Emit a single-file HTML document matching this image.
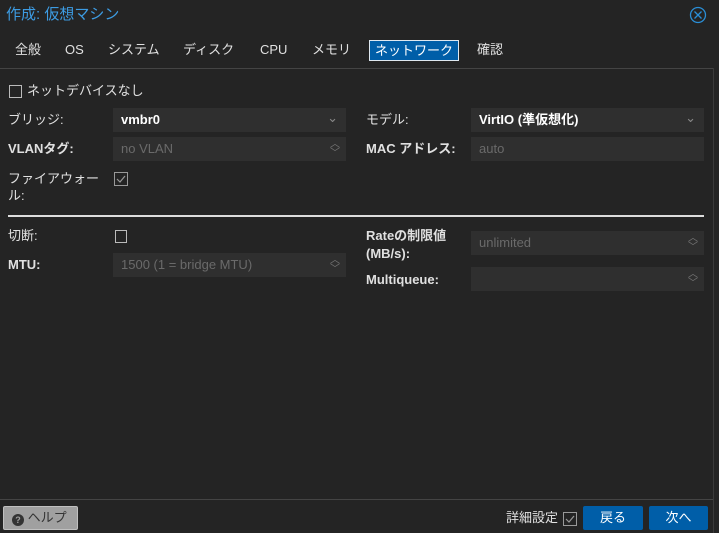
<!DOCTYPE html><html><head><meta charset="utf-8"><style>
*{box-sizing:border-box;margin:0;padding:0}
body{width:719px;height:533px;background:#242424;font-family:"Liberation Sans","Noto Sans CJK JP",sans-serif;font-size:13px;line-height:16px;color:#e0e0e0;position:relative;overflow:hidden}
.a{position:absolute;white-space:nowrap;line-height:16px}
.f{position:absolute;height:24px;background:#2f2f2f;padding:0 8px;line-height:24px;font-size:13px}
.dis{color:#6a6a6a}
.chk{position:absolute;width:13px;height:13px;border:1px solid #bbb}
.b{position:absolute;font-weight:bold;white-space:nowrap;line-height:16px}
.ar{position:absolute;right:6px;top:3px;color:#777;font-size:10px;line-height:9px;font-weight:normal}
</style></head><body>
<div class="a" style="left:6px;top:7px;font-size:15px;color:#3d9ce3">作成: 仮想マシン</div>
<svg class="a" style="left:689px;top:6px" width="18" height="18"><circle cx="9" cy="9" r="7.5" fill="none" stroke="#2a8ed6" stroke-width="1.3"/><path d="M5.5 5.5L12.5 12.5M12.5 5.5L5.5 12.5" stroke="#2a8ed6" stroke-width="1.3"/></svg>
<div class="a" style="left:15px;top:42px">全般</div>
<div class="a" style="left:65px;top:42px">OS</div>
<div class="a" style="left:108px;top:42px">システム</div>
<div class="a" style="left:183px;top:42px">ディスク</div>
<div class="a" style="left:260px;top:42px">CPU</div>
<div class="a" style="left:312px;top:42px">メモリ</div>
<div class="a" style="left:369px;top:40px;width:90px;height:21px;background:#005ea8;border:1px solid #dfe8f0;color:#fff;padding-left:5px;line-height:19px">ネットワーク</div>
<div class="a" style="left:477px;top:42px">確認</div>
<div class="a" style="left:0;top:68px;width:713px;height:1px;background:#444"></div>
<div class="a" style="left:713px;top:68px;width:1px;height:465px;background:#3a3a3a"></div>
<div class="chk" style="left:9px;top:85px"></div>
<div class="a" style="left:27px;top:83px">ネットデバイスなし</div>
<div class="a" style="left:8px;top:112px">ブリッジ:</div>
<div class="f" style="left:113px;top:108px;width:233px;color:#fff;font-weight:bold">vmbr0<span class="a" style="right:8px;top:2px;color:#888;font-weight:normal">⌄</span></div>
<div class="b" style="left:8px;top:141px">VLANタグ:</div>
<div class="f dis" style="left:113px;top:137px;width:233px">no VLAN<span class="ar">︿<br>﹀</span></div>
<div class="a" style="left:8px;top:171px">ファイアウォー</div>
<div class="a" style="left:8px;top:188px">ル:</div>
<svg class="a" style="left:114px;top:172px" width="14" height="14"><rect x=".5" y=".5" width="13" height="13" fill="none" stroke="#999"/><path d="M3 7l3 3 5-6" fill="none" stroke="#999" stroke-width="1.2"/></svg>
<div class="a" style="left:366px;top:112px">モデル:</div>
<div class="f" style="left:471px;top:108px;width:233px;color:#fff;font-weight:bold">VirtIO (準仮想化)<span class="a" style="right:8px;top:2px;color:#888;font-weight:normal">⌄</span></div>
<div class="b" style="left:366px;top:141px">MAC アドレス:</div>
<div class="f dis" style="left:471px;top:137px;width:233px">auto</div>
<div class="a" style="left:8px;top:215px;width:696px;height:2px;background:#ddd"></div>
<div class="a" style="left:8px;top:228px">切断:</div>
<div class="chk" style="left:115px;top:230px;width:12px;height:13px"></div>
<div class="b" style="left:8px;top:257px">MTU:</div>
<div class="f dis" style="left:113px;top:253px;width:233px">1500 (1 = bridge MTU)<span class="ar">︿<br>﹀</span></div>
<div class="b" style="left:366px;top:228px">Rateの制限値</div>
<div class="b" style="left:366px;top:246px">(MB/s):</div>
<div class="f dis" style="left:471px;top:231px;width:233px">unlimited<span class="ar">︿<br>﹀</span></div>
<div class="b" style="left:366px;top:272px">Multiqueue:</div>
<div class="f" style="left:471px;top:267px;width:233px"><span class="ar">︿<br>﹀</span></div>
<div class="a" style="left:0;top:499px;width:713px;height:1px;background:#444"></div>
<div class="a" style="left:3px;top:506px;width:75px;height:24px;background:#a0a0a0;border:1px solid #c0c0c0;border-radius:2px;color:#333;line-height:22px;padding-left:8px;font-size:13px"><span style="display:inline-block;width:12px;height:12px;border-radius:50%;background:#333;color:#a0a0a0;font-size:9px;line-height:12px;text-align:center;font-weight:bold;vertical-align:-1px">?</span> ヘルプ</div>
<div class="a" style="left:506px;top:510px">詳細設定</div>
<svg class="a" style="left:563px;top:512px" width="14" height="14"><rect x=".5" y=".5" width="13" height="13" fill="none" stroke="#999"/><path d="M3 7l3 3 5-6" fill="none" stroke="#999" stroke-width="1.2"/></svg>
<div class="a" style="left:583px;top:506px;width:60px;height:24px;background:#005ea8;border-radius:2px;color:#fff;text-align:center;line-height:24px">戻る</div>
<div class="a" style="left:649px;top:506px;width:59px;height:24px;background:#005ea8;border-radius:2px;color:#fff;text-align:center;line-height:24px">次へ</div>
</body></html>
